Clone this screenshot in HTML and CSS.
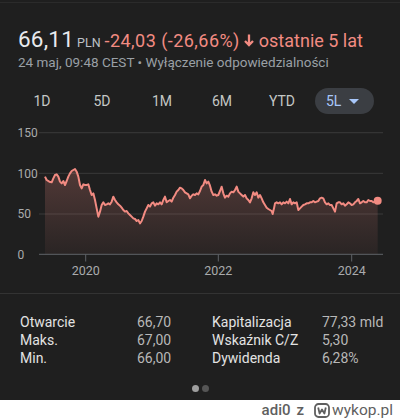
FILE: index.html
```html
<!DOCTYPE html>
<html lang="pl">
<head>
<meta charset="utf-8">
<title>Notowanie</title>
<link rel="stylesheet" href="styles.css">
</head>
<body>
<div class="card">
  <div class="topline"></div>
  <div class="quote">
    <div class="price-row">
      <span class="price">66,11</span>
      <span class="currency">PLN</span>
      <span class="change num">-24,03 (-26,66%)</span>
      <svg class="arrow" width="10" height="13" viewBox="0 0 10 13"><path d="M5 0.5 V11 M1 7 L5 11 L9 7" fill="none" stroke="#f28b82" stroke-width="2.3" stroke-linecap="butt" stroke-linejoin="miter"/></svg>
      <span class="change">ostatnie 5 lat</span>
    </div>
    <div class="meta">24 maj, 09:48 CEST • Wyłączenie odpowiedzialności</div>
  </div>
  <div class="tabs">
    <span class="tab">1D</span>
    <span class="tab">5D</span>
    <span class="tab">1M</span>
    <span class="tab">6M</span>
    <span class="tab">YTD</span>
    <span class="pill">5L<svg class="drop" width="10" height="5" viewBox="7 10 10 5"><path d="M7 10l5 5 5-5z" fill="#a8c7fa"/></svg></span>
  </div>
  <svg class="chart" width="400" height="178" viewBox="0 0 400 178">
    <defs>
      <linearGradient id="fillg" x1="0" y1="0" x2="0" y2="1">
        <stop offset="0" stop-color="#f28b82" stop-opacity="0.24"/>
        <stop offset="1" stop-color="#f28b82" stop-opacity="0.05"/>
      </linearGradient>
    </defs>
    <g class="grid">
      <line x1="39" y1="17.7" x2="383" y2="17.7"/>
      <line x1="39" y1="58.3" x2="383" y2="58.3"/>
      <line x1="39" y1="99" x2="383" y2="99"/>
    </g>
    <g class="ylab">
      <text x="17.5" y="22">150</text>
      <text x="17.5" y="62.5">100</text>
      <text x="17.5" y="103.2">50</text>
      <text x="17.5" y="143.5">0</text>
    </g>
    <g transform="scale(0.33333)">
      <polygon fill="url(#fillg)" points="135,418 135,185 140,195 148,200 155,202 160,190 165,180 170,178 175,185 180,200 185,205 190,198 195,210 200,198 205,185 210,175 215,168 220,165 225,162 230,170 235,185 240,210 245,220 250,208 255,210 260,210 265,208 270,225 275,240 280,235 285,255 290,280 295,305 300,290 305,270 310,262 315,270 320,268 325,265 330,268 335,260 340,245 345,255 350,262 355,268 360,272 365,278 370,285 375,290 380,288 385,295 390,300 395,305 400,310 405,312 410,318 415,315 420,325 425,318 430,305 435,290 440,280 445,270 450,275 455,265 460,262 465,272 470,265 475,268 480,262 485,268 490,255 495,245 500,262 505,258 510,255 515,260 520,248 525,240 530,230 535,225 540,218 545,220 550,225 555,232 560,235 565,238 570,250 575,242 580,238 585,240 590,235 595,238 600,228 605,215 610,210 615,195 620,205 625,200 630,212 635,230 640,240 645,238 650,242 655,240 660,228 665,215 670,235 675,248 680,242 685,245 690,235 695,230 700,232 705,225 710,215 715,230 720,235 725,240 730,245 735,240 740,250 745,255 750,262 755,250 760,232 765,240 770,232 775,248 780,240 785,250 790,262 795,270 800,278 805,282 810,285 815,288 818,297 822,280 825,265 830,262 835,265 840,262 845,268 850,262 855,265 860,260 865,265 870,252 875,268 880,262 885,265 890,262 895,285 900,280 905,275 910,270 915,268 920,265 925,265 930,262 935,262 940,258 945,262 950,260 955,258 960,250 965,248 970,250 975,262 980,268 985,265 990,270 995,270 1000,280 1005,290 1010,265 1015,262 1020,262 1025,268 1030,265 1035,272 1040,268 1045,262 1050,265 1055,270 1060,268 1065,262 1070,258 1075,252 1080,265 1085,262 1090,258 1095,262 1100,262 1105,255 1110,258 1115,258 1120,262 1125,260 1133,257 1133,418"/>
      <polyline class="line" points="135,185 140,195 148,200 155,202 160,190 165,180 170,178 175,185 180,200 185,205 190,198 195,210 200,198 205,185 210,175 215,168 220,165 225,162 230,170 235,185 240,210 245,220 250,208 255,210 260,210 265,208 270,225 275,240 280,235 285,255 290,280 295,305 300,290 305,270 310,262 315,270 320,268 325,265 330,268 335,260 340,245 345,255 350,262 355,268 360,272 365,278 370,285 375,290 380,288 385,295 390,300 395,305 400,310 405,312 410,318 415,315 420,325 425,318 430,305 435,290 440,280 445,270 450,275 455,265 460,262 465,272 470,265 475,268 480,262 485,268 490,255 495,245 500,262 505,258 510,255 515,260 520,248 525,240 530,230 535,225 540,218 545,220 550,225 555,232 560,235 565,238 570,250 575,242 580,238 585,240 590,235 595,238 600,228 605,215 610,210 615,195 620,205 625,200 630,212 635,230 640,240 645,238 650,242 655,240 660,228 665,215 670,235 675,248 680,242 685,245 690,235 695,230 700,232 705,225 710,215 715,230 720,235 725,240 730,245 735,240 740,250 745,255 750,262 755,250 760,232 765,240 770,232 775,248 780,240 785,250 790,262 795,270 800,278 805,282 810,285 815,288 818,297 822,280 825,265 830,262 835,265 840,262 845,268 850,262 855,265 860,260 865,265 870,252 875,268 880,262 885,265 890,262 895,285 900,280 905,275 910,270 915,268 920,265 925,265 930,262 935,262 940,258 945,262 950,260 955,258 960,250 965,248 970,250 975,262 980,268 985,265 990,270 995,270 1000,280 1005,290 1010,265 1015,262 1020,262 1025,268 1030,265 1035,272 1040,268 1045,262 1050,265 1055,270 1060,268 1065,262 1070,258 1075,252 1080,265 1085,262 1090,258 1095,262 1100,262 1105,255 1110,258 1115,258 1120,262 1125,260 1133,257"/>
      <circle cx="1133" cy="257" r="12" fill="#f28b82"/>
    </g>
    <g class="axis">
      <line x1="39" y1="139.3" x2="383" y2="139.3"/>
      <line x1="85.7" y1="139.3" x2="85.7" y2="146.5"/>
      <line x1="218.3" y1="139.3" x2="218.3" y2="146.5"/>
      <line x1="351.7" y1="139.3" x2="351.7" y2="146.5"/>
    </g>
    <g class="xlab">
      <text x="85.7" y="159.5">2020</text>
      <text x="218.3" y="159.5">2022</text>
      <text x="351.7" y="159.5">2024</text>
    </g>
  </svg>
  <div class="stats">
    <span class="label">Otwarcie</span><span class="value">66,70</span><span class="label">Kapitalizacja</span><span class="value">77,33 mld</span>
    <span class="label">Maks.</span><span class="value">67,00</span><span class="label">Wskaźnik C/Z</span><span class="value">5,30</span>
    <span class="label">Min.</span><span class="value">66,00</span><span class="label">Dywidenda</span><span class="value">6,28%</span>
  </div>
  <div class="dots"><span class="dot active"></span><span class="dot"></span></div>
</div>
<div class="footer">
  <span class="author">adi0</span>
  <span class="z">z</span>
  <svg class="logo" width="16" height="15" viewBox="0 0 16 15"><rect x="1" y="1" width="14" height="13" rx="3.5" fill="none" stroke="#5f5f5f" stroke-width="1.8"/><path d="M4.2 4.5 L5.6 10.5 L8 6.5 L10.4 10.5 L11.8 4.5" fill="none" stroke="#5f5f5f" stroke-width="1.8" stroke-linejoin="round"/></svg>
  <span class="brand">wykop.pl</span>
</div>
</body>
</html>
```
FILE: styles.css
```css
html, body {
  margin: 0;
  padding: 0;
}
body {
  width: 400px;
  height: 420px;
  overflow: hidden;
  background: #ffffff;
  font-family: Roboto, "Noto Sans", "Liberation Sans", sans-serif;
}
.card {
  height: 400px;
  background: #1f1f1f;
  display: flex;
  flex-direction: column;
}
.topline {
  height: 2px;
  border-bottom: 1px solid #2b2b2b;
}
.quote {
  padding: 22px 0 0 18px;
}
.price-row {
  display: flex;
  align-items: baseline;
  height: 28px;
  line-height: 28px;
  white-space: nowrap;
}
.price {
  font-size: 22.5px;
  color: #e8eaed;
  letter-spacing: 0.2px;
}
.currency {
  font-size: 12.5px;
  color: #bdc1c6;
  margin-left: 3px;
  margin-right: 4px;
}
.change {
  font-size: 18px;
  color: #f28b82;
}
.change.num {
  letter-spacing: 0.45px;
}
.arrow {
  align-self: center;
  margin: 2px 5px 0 4px;
}
.meta {
  font-size: 13.5px;
  line-height: 18px;
  color: #9aa0a6;
  white-space: nowrap;
}
.tabs {
  display: flex;
  align-items: center;
  height: 26px;
  margin-top: 17px;
  padding-left: 12px;
}
.tab {
  width: 60px;
  text-align: center;
  font-size: 14px;
  color: #c4c7c5;
}
.pill {
  margin-left: 3px;
  height: 26px;
  border-radius: 13px;
  background: #3b3e43;
  color: #a8c7fa;
  font-size: 14px;
  display: flex;
  align-items: center;
  padding: 0 15px 0 11px;
  gap: 8px;
}
.drop {
  display: block;
}
.chart {
  display: block;
  margin-top: 1px;
}
.grid line {
  stroke: #3a3a3a;
  stroke-width: 1;
}
.axis line {
  stroke: #5f6368;
  stroke-width: 1;
}
.ylab text {
  font-size: 12px;
  fill: #a9abad;
  font-family: Roboto, sans-serif;
}
.xlab text {
  font-size: 12.5px;
  fill: #a9abad;
  text-anchor: middle;
  font-family: Roboto, sans-serif;
}
.line {
  fill: none;
  stroke: #f28b82;
  stroke-width: 6;
  stroke-linejoin: round;
}
.stats {
  border-top: 1px solid #333333;
  padding: 19px 0 0 20px;
  display: grid;
  grid-template-columns: 117px 75px 110px 1fr;
  font-size: 14px;
  line-height: 18px;
}
.label {
  color: #e3e3e3;
}
.value {
  color: #b8b8b8;
}
.dots {
  display: flex;
  justify-content: center;
  gap: 3px;
  margin-top: 18px;
}
.dot {
  width: 7px;
  height: 7px;
  border-radius: 50%;
  background: #555555;
}
.dot.active {
  background: #9e9e9e;
}
.footer {
  height: 20px;
  display: flex;
  align-items: center;
  justify-content: flex-end;
  padding-right: 7px;
  color: #5f5f5f;
  font-family: Roboto, "Liberation Sans", sans-serif;
  font-weight: 500;
  font-size: 15px;
}
.author {
  margin-right: 6px;
}
.z {
  margin-right: 10px;
}
.logo {
  margin-right: 2px;
}
.brand {
  font-size: 15.5px;
  font-weight: 400;
}
```
